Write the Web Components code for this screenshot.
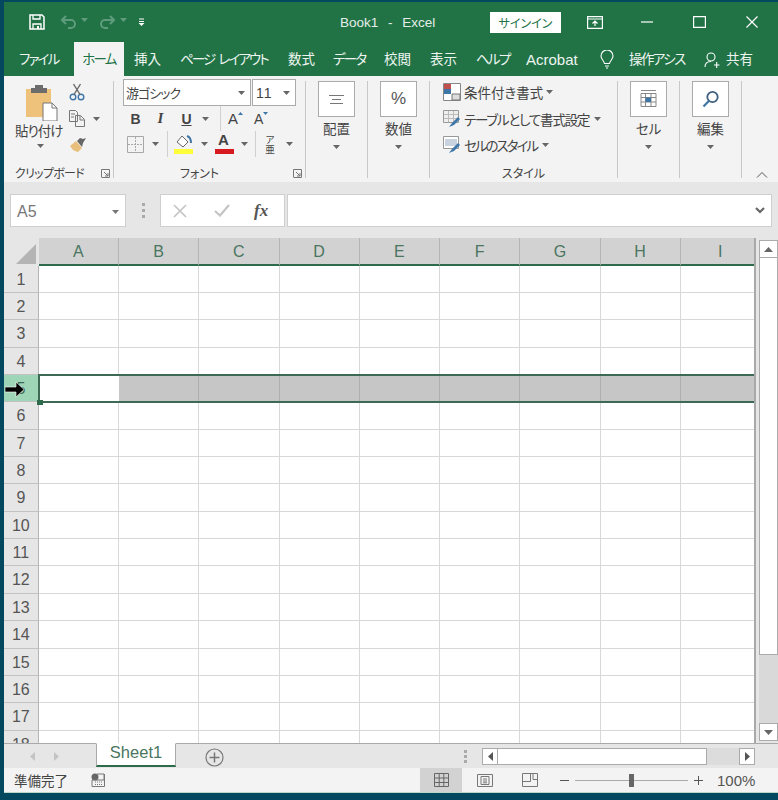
<!DOCTYPE html>
<html lang="ja">
<head>
<meta charset="utf-8">
<title>Book1 - Excel</title>
<style>
  html, body { margin: 0; height: 100%; background: #03485f; }
  body {
    font-family: "Noto Sans CJK JP", "Liberation Sans", sans-serif;
    font-feature-settings: "palt";
    color: #444;
    overflow: hidden;
  }
  #window { display: flex; flex-direction: column; width: 774px; height: 791px; margin: 2px 0 0 4px; background: #f3f3f3; }
</style>
</head>
<body>
<div id="window">
  <xl-titlebar></xl-titlebar>
  <xl-tabs></xl-tabs>
  <xl-ribbon></xl-ribbon>
  <xl-formula></xl-formula>
  <xl-sheet></xl-sheet>
  <xl-sheetbar></xl-sheetbar>
  <xl-status></xl-status>
</div>

<script>
class Shadowed extends HTMLElement {
  constructor() {
    super();
    this.attachShadow({ mode: "open" });
    this.shadowRoot.innerHTML = this.markup();
  }
}

const caret = (c = "#666") => `<svg width="7" height="4" viewBox="0 0 7 4"><path d="M0 0h7L3.500 4z" fill="${c}"/></svg>`;

class XlTitlebar extends Shadowed {
  markup() {
    return `
    <style>
      :host { display: flex; align-items: center; height: 40px; background: #217346; color: #fff; flex: none; position: relative; }
      .qat { display: flex; align-items: center; width: 336px; padding-left: 25px; box-sizing: border-box; gap: 0; }
      .title { font: 13.500px "Liberation Sans", sans-serif; width: 150px; color: #e4eee8; word-spacing: 6px; }
      .signin { width: 71px; height: 21px; background: #fff; color: #217346; font-size: 12px; display: flex; align-items: center; justify-content: center; }
      .ctl { display: flex; align-items: center; }
      svg { display: block; }
    </style>
    <div class="qat">
      <svg width="16" height="16" viewBox="0 0 16 16" fill="none" stroke="#fff" stroke-width="1.500"><path d="M1 1h12l2 2v12H1z"/><path d="M4 1v4h7V1M4 15v-5h8v5" stroke-width="1.300"/><path d="M8 12h2v3H8z" fill="#fff" stroke="none"/></svg>
      <svg style="margin-left:15px" width="17" height="14" viewBox="0 0 17 14" fill="none" stroke="#5f9c7c" stroke-width="2"><path d="M6 1L2 5l4 4M2 5h9a4 4 0 0 1 0 8H8"/></svg>
      <span style="margin:0 0 4px 4px">${caret("#5f9c7c")}</span>
      <svg style="margin-left:11px" width="17" height="14" viewBox="0 0 17 14" fill="none" stroke="#5f9c7c" stroke-width="2"><path d="M11 1l4 4-4 4M15 5H6a4 4 0 0 0 0 8h3"/></svg>
      <span style="margin:0 0 4px 4px">${caret("#5f9c7c")}</span>
      <svg style="margin-left:11px" width="7" height="8" viewBox="0 0 7 8"><path d="M1 1h5M1 3.500h5" stroke="#fff"/><path d="M.5 5h6L3.500 8z" fill="#fff"/></svg>
    </div>
    <div class="title">Book1 - Excel</div>
    <div class="signin">サインイン</div>
    <div class="ctl">
      <svg style="margin-left:26px" width="16" height="13" viewBox="0 0 16 13" fill="none" stroke="#fff" stroke-width="1.200"><path d="M.6.600h14.800v11.800H.6zM.6 3h14.800"/><path d="M8 10V5M5.500 7.500L8 5l2.500 2.500" /></svg>
      <svg style="margin-left:38px" width="12" height="2" viewBox="0 0 12 2"><path d="M0 1h12" stroke="#fff" stroke-width="1.200"/></svg>
      <svg style="margin-left:40px" width="13" height="12" viewBox="0 0 13 12" fill="none" stroke="#fff" stroke-width="1.200"><path d="M.6.600h11.800v10.800H.6z"/></svg>
      <svg style="margin-left:40px" width="12" height="12" viewBox="0 0 12 12" fill="none" stroke="#fff" stroke-width="1.200"><path d="M.5.500l11 11M11.500.5l-11 11"/></svg>
    </div>`;
  }
}

class XlTabs extends Shadowed {
  markup() {
    return `
    <style>
      :host { display: flex; align-items: stretch; height: 34px; background: #217346; color: #fff; font-size: 13.500px; flex: none; overflow: hidden; }
      .t { display: flex; align-items: center; white-space: pre; padding-bottom: 2px; box-sizing: border-box; color: #eef5f1; }
      .k { letter-spacing: -1.800px; }
      .on { background: #f3f3f3; color: #217346; justify-content: center; width: 50px; }
      .ac { font: 15px "Liberation Sans", sans-serif; padding-bottom: 0; }
    </style>
    <span class="t k" style="margin-left:15px;width:55px">ファイル</span>
    <span class="t k on">ホーム</span>
    <span class="t" style="margin-left:10px;width:46px">挿入</span>
    <span class="t k" style="width:108px;letter-spacing:-1.900px;word-spacing:3px">ページ レイアウト</span>
    <span class="t" style="width:45px">数式</span>
    <span class="t k" style="width:51px">データ</span>
    <span class="t" style="width:46px">校閲</span>
    <span class="t" style="width:46px">表示</span>
    <span class="t k" style="width:50px">ヘルプ</span>
    <span class="t ac" style="width:74px">Acrobat</span>
    <svg style="align-self:center;margin-top:0" width="14" height="19" viewBox="0 0 14 19" fill="none" stroke="#fff" stroke-width="1.100"><path d="M4.500 13.500C4 10.500 1 9.500 1 6a6 6 0 0 1 12 0c0 3.500-3 4.500-3.500 7.500zM5 16h4M6 18h2"/></svg>
    <span class="t" style="margin-left:15px;width:57px;letter-spacing:-1.600px">操作アシス</span>
    <svg style="align-self:center;margin:1px 0 0 18px" width="16" height="16" viewBox="0 0 16 16" fill="none" stroke="#fff" stroke-width="1.100"><circle cx="7" cy="5" r="4"/><path d="M1 15c0-3 2-5.500 6-5.500M10 13h5.500M12.700 10v6"/></svg>
    <span class="t" style="margin-left:6px;width:30px">共有</span>`;
  }
}

// one ribbon group: slot for content, label along the bottom
class XlGroup extends Shadowed {
  static get observedAttributes() { return ["label", "launcher"]; }
  attributeChangedCallback(name, _, value) {
    if (name === "label") this.shadowRoot.querySelector(".label").textContent = value;
    if (name === "launcher") this.shadowRoot.querySelector(".launch").style.display = "block";
  }
  markup() {
    return `
    <style>
      :host { display: block; position: relative; box-sizing: border-box; height: 97px; margin-top: 5px; border-right: 1px solid #c8c8c8; flex: none; }
      .label { position: absolute; left: 0; right: var(--label-right, 0); top: 84px; text-align: center; font-size: 12px; line-height: 16px; color: #444; letter-spacing: var(--label-ls, 0); white-space: nowrap; }
      .launch { display: none; position: absolute; right: 3px; top: 88px; }
    </style>
    <slot></slot>
    <div class="label"></div>
    <svg class="launch" width="9" height="9" viewBox="0 0 9 9" fill="none" stroke="#777"><path d="M.5 8V.5H8.500V8.500H.5M3 3l4 4M7 4v3H4"/></svg>`;
  }
}

// big square button: icon box, label, caret
class XlBigButton extends Shadowed {
  static get observedAttributes() { return ["label"]; }
  attributeChangedCallback(name, _, value) {
    this.shadowRoot.querySelector(".txt").textContent = value;
  }
  markup() {
    return `
    <style>
      :host { display: flex; flex-direction: column; align-items: center; width: 37px; margin-left: 12px; }
      .box { width: 35px; height: 34px; border: 1px solid #ababab; background: #fff; display: flex; align-items: center; justify-content: center; flex: none; }
      .txt { font-size: 13.500px; line-height: 20px; margin-top: 1px; color: #444; white-space: nowrap; }
      .car { line-height: 0; margin-top: 4px; }
    </style>
    <div class="box"><slot></slot></div>
    <div class="txt"></div>
    <div class="car">${caret()}</div>`;
  }
}

class XlRibbon extends Shadowed {
  markup() {
    return `
    <style>
      :host { display: flex; height: 106px; background: #f3f3f3; flex: none; position: relative; color: #444; }
      svg { display: block; }
      .row { display: flex; align-items: center; }
      .combo { height: 25px; border: 1px solid #ababab; background: #fff; display: flex; align-items: center; justify-content: space-between; padding: 0 5px 0 2px; font-size: 13px; letter-spacing: -1px; }
      .b { font: bold 14px "Liberation Sans", sans-serif; color: #444; width: 25px; text-align: center; }
      .sep { width: 1px; background: #d0d0d0; align-self: stretch; }
      .st { display: flex; align-items: center; height: 26.500px; font-size: 13.500px; gap: 3px; white-space: nowrap; }
      .collapse { position: absolute; left: 752px; top: 95px; }
    </style>
    <xl-group label="クリップボード" launcher style="width:110px;--label-right:18px;--label-ls:-.7px">
      <svg style="position:absolute;left:22px;top:3px" width="33" height="37" viewBox="0 0 33 37">
        <rect x="0" y="5" width="25" height="28" fill="#eec27a"/>
        <rect x="9" y="1" width="8" height="7" fill="#6c6c6c"/><rect x="5" y="4" width="16" height="5" fill="#6c6c6c"/>
        <path d="M17 19h9l5 5v13H17z" fill="#fff" stroke="#777"/><path d="M26 19v5h5" fill="none" stroke="#777"/>
      </svg>
      <div style="position:absolute;left:11px;top:39px;font-size:13.500px;line-height:20px;letter-spacing:-1px;white-space:nowrap">貼り付け</div>
      <div style="position:absolute;left:33px;top:63px;line-height:0">${caret()}</div>
      <svg style="position:absolute;left:65px;top:2px" width="16" height="18" viewBox="0 0 16 18" fill="none" stroke="#3f76a8" stroke-width="1.400"><circle cx="4" cy="14" r="2.800"/><circle cx="12" cy="14" r="2.800"/><path d="M5 11.500L11.500 1M11 11.500L4.500 1" stroke="#666"/></svg>
      <svg style="position:absolute;left:65px;top:29px" width="16" height="17" viewBox="0 0 16 17" fill="none" stroke="#777"><path d="M.5.500h6l2 2v9h-8zM6.500 5.500h5l4 4v7h-9zM11 6v4h4M2 4h4M2 7h3"/></svg>
      <div style="position:absolute;left:89px;top:36px;line-height:0">${caret()}</div>
      <svg style="position:absolute;left:66px;top:57px" width="17" height="15" viewBox="0 0 17 15"><path d="M0 8l6-5 6 7-4 4-3-1-2-1z" fill="#e8bf7d"/><path d="M7 3l3-3 3 1 3-1-3 5-1 4z" fill="#666"/></svg>
    </xl-group>

    <xl-group label="フォント" launcher style="width:192px;--label-right:20px">
      <div class="row" style="position:absolute;left:9px;top:-2px">
        <div class="combo" style="width:119px">游ゴシック<span style="line-height:0">${caret()}</span></div>
        <div class="combo" style="width:34px;margin-left:1px;font:14px 'Liberation Sans',sans-serif;letter-spacing:1px;padding-left:3px">11<span style="line-height:0">${caret()}</span></div>
      </div>
      <div class="row" style="position:absolute;left:9px;top:25px;height:25px">
        <span class="b">B</span>
        <span class="b" style="font-family:'Liberation Serif',serif;font-style:italic;font-size:15px">I</span>
        <span class="b" style="text-decoration:underline;margin-left:1px">U</span>
        <span style="line-height:0;margin:0 11px 0 3px">${caret()}</span>
        <span class="sep"></span>
        <span style="font:15px 'Liberation Sans',sans-serif;margin-left:7px">A</span><svg style="margin:-10px 0 0 0" width="5" height="4"><path d="M0 3l2.500-3L5 3z" fill="#3f76a8"/></svg>
        <span style="font:14px 'Liberation Sans',sans-serif;margin-left:11px">A</span><svg style="margin:-10px 0 0 0" width="5" height="4"><path d="M0 0l2.500 3L5 0z" fill="#3f76a8"/></svg>
      </div>
      <div class="row" style="position:absolute;left:13px;top:50px;height:26px">
        <svg width="17" height="17" viewBox="0 0 17 17" fill="none" stroke="#a8a8a8"><path d="M.5.500h16v16H.5z"/><path d="M8.500 1v15M1 8.500h15" stroke-dasharray="2 1"/></svg>
        <span style="line-height:0;margin:0 8px 0 8px">${caret()}</span>
        <span class="sep"></span>
        <svg style="margin-left:6px" width="19" height="20" viewBox="0 0 19 20"><path d="M3 8l5-6 6 6-5 5z" fill="#fff" stroke="#666"/><path d="M13 2c3 1 4 3 4 7" fill="none" stroke="#3f76a8" stroke-width="2"/><rect y="15" width="19" height="5" fill="#ffff3b"/></svg>
        <span style="line-height:0;margin:0 7px 0 8px">${caret()}</span>
        <span style="position:relative;width:19px;height:20px;flex:none">
          <span style="position:absolute;left:3px;top:-3px;font:bold 15px 'Liberation Sans',sans-serif;color:#444">A</span>
          <svg style="position:absolute;left:0;top:15px" width="19" height="5"><rect width="19" height="5" fill="#d71920"/></svg>
        </span>
        <span style="line-height:0;margin:0 7px 0 7px">${caret()}</span>
        <span class="sep"></span>
        <span style="font-size:9.500px;line-height:10.500px;width:12px;margin-left:8px;text-align:center">ア<br>亜</span>
        <span style="line-height:0;margin-left:10px">${caret()}</span>
      </div>
    </xl-group>

    <xl-group style="width:62px" label="">
      <xl-big-button label="配置">
        <svg width="15" height="9" viewBox="0 0 15 9" fill="none" stroke="#777"><path d="M0 .5h15M3 4.500h9M1 8.500h13"/></svg>
      </xl-big-button>
    </xl-group>
    <xl-group style="width:62px" label="">
      <xl-big-button label="数値">
        <span style="font:17px 'Liberation Sans',sans-serif;color:#555">%</span>
      </xl-big-button>
    </xl-group>

    <xl-group label="スタイル" style="width:188px">
      <div style="position:absolute;left:13px;top:-2px">
        <div class="st"><svg width="18" height="18" viewBox="0 0 18 18"><path d="M.5.500h17v17H.5z" fill="#fff" stroke="#888"/><path d="M1 1h7v5H1z" fill="#c0504d"/><path d="M1 6h7v5H1z" fill="#3f76a8"/><path d="M9 11h8v6H9z" fill="#ddd" stroke="#777"/></svg><span>条件付き書式</span> ${caret()}</div>
        <div class="st" style="gap:2px"><svg width="19" height="18" viewBox="0 0 19 18"><path d="M.5.500h15v12H.5z" fill="#eee" stroke="#999"/><path d="M1 4.500h14M1 8.500h14M5.500 1v11M10.500 1v11" stroke="#bbb"/><path d="M6 17l3-4 6-6 2 2-6 6z" fill="#3f76a8"/></svg><span style="letter-spacing:-1.200px;margin-right:3px">テーブルとして書式設定</span> ${caret()}</div>
        <div class="st" style="gap:2px"><svg width="19" height="18" viewBox="0 0 19 18"><path d="M.5.500h15v12H.5z" fill="#fff" stroke="#999"/><path d="M2 3h12v7H2z" fill="#c9d3e0"/><path d="M6 17l3-4 6-6 2 2-6 6z" fill="#3f76a8"/></svg><span style="letter-spacing:-2px;margin-right:3px">セルのスタイル</span> ${caret()}</div>
      </div>
    </xl-group>
    <xl-group style="width:62px" label="">
      <xl-big-button label="セル">
        <svg width="17" height="19" viewBox="0 0 17 19" fill="none" stroke="#888"><path d="M1 3.500h15v13H1zM1 7.500h15M1 12h15M5.500 3.500v13M11 3.500v13M1 .5h15"/><rect x="5.500" y="7.500" width="5.500" height="4.500" fill="#3f76a8" stroke="none"/></svg>
      </xl-big-button>
    </xl-group>
    <xl-group style="width:62px" label="">
      <xl-big-button label="編集">
        <svg width="18" height="18" viewBox="0 0 18 18" fill="none" stroke-width="1.800"><circle cx="10.500" cy="7" r="5.200" stroke="#3f5f7f"/><path d="M6.800 11L1.500 16.500" stroke="#3f76a8" stroke-width="2.200"/></svg>
      </xl-big-button>
    </xl-group>
    <svg class="collapse" width="12" height="7" viewBox="0 0 12 7" fill="none" stroke="#555"><path d="M1 6.500l5-5 5 5"/></svg>`;
  }
}

class XlFormula extends Shadowed {
  markup() {
    return `
    <style>
      :host { display: flex; height: 56px; background: #e6e6e6; padding: 12px 6px 11px 6px; box-sizing: border-box; align-items: stretch; flex: none; }
      .box { background: #fff; border: 1px solid #cfcfcf; box-sizing: border-box; display: flex; align-items: center; }
      .name { width: 116px; justify-content: space-between; padding: 2px 6px 0 6px; font: 16px "Liberation Sans", sans-serif; color: #777; }
      .dots { width: 34px; display: flex; flex-direction: column; align-items: center; justify-content: center; gap: 3px; }
      .dots i { width: 3px; height: 3px; background: #aaa; }
      .fn { width: 125px; padding-left: 12px; gap: 0; }
      .fx { font: italic bold 17px "Liberation Serif", serif; color: #555; margin-left: 24px; }
      .input { flex: 1; margin-left: 2px; justify-content: flex-end; padding-right: 6px; }
      svg { display: block; }
    </style>
    <div class="box name">A5${caret("#777")}</div>
    <div class="dots"><i></i><i></i><i></i></div>
    <div class="box fn">
      <svg width="14" height="14" viewBox="0 0 14 14" stroke="#c4c4c4" stroke-width="1.700"><path d="M1 1l12 12M13 1L1 13"/></svg>
      <svg style="margin-left:27px" width="16" height="13" viewBox="0 0 16 13" fill="none" stroke="#c4c4c4" stroke-width="2.200"><path d="M1 7l5 4.500L15 1"/></svg>
      <span class="fx">fx</span>
    </div>
    <div class="box input"><svg width="10" height="7" viewBox="0 0 10 7" fill="none" stroke="#666" stroke-width="2.200"><path d="M1 1l4 4 4-4"/></svg></div>`;
  }
}

class XlSheet extends Shadowed {
  markup() {
    const cols = "ABCDEFGHI".split("");
    const head = cols.map(c => `<div class="ch">${c}</div>`).join("");
    let rows = "";
    for (let r = 1; r <= 18; r++) {
      const sel = r === 5 ? " sel" : "";
      rows += `<div class="rh${sel}">${r}</div>` + cols.map(c => `<div class="c${sel}"></div>`).join("");
    }
    return `
    <style>
      :host { display: flex; height: 505px; background: #fff; flex: none; overflow: hidden; }
      .pane { flex: 1; position: relative; overflow: hidden; border-right: 2px solid #a9a9a9; box-sizing: border-box; }
      .grid { display: grid; grid-template-columns: 34.750px repeat(8, 80.250px) 80px; grid-template-rows: 27.700px repeat(18, 27.350px); }
      .corner { background: #e6e6e6; display: flex; align-items: flex-end; justify-content: flex-end; padding: 0 3px 2px 0; }
      .ch { background: #d2d2d2; border-right: 1px solid #b4b4b4; border-bottom: 2px solid #2e6b4c; box-sizing: border-box; text-align: center; font: 16px/27px "Liberation Sans", sans-serif; color: #4a7560; }
      .rh { background: #e6e6e6; border-bottom: 1px solid #c2c2c2; border-right: 1px solid #b4b4b4; box-sizing: border-box; text-align: center; font: 16px/28.500px "Liberation Sans", sans-serif; color: #555; }
      .rh.sel { background: #9fd5b7; color: #3d6a54; }
      .c { border-right: 1px solid #d8d8d8; border-bottom: 1px solid #d8d8d8; box-sizing: border-box; }
      .c.sel { background: #c6c6c6; border-right-color: #aeaeae; border-bottom: 0; }
      .select { position: absolute; left: 33.500px; top: 136px; right: -2px; height: 29px; border: 2px solid #3d6a54; border-right: 0; box-sizing: border-box; }
      .active { position: absolute; left: 35.500px; top: 138px; width: 79px; height: 25px; background: #fff; }
      .handle { position: absolute; left: 33px; top: 162px; width: 6px; height: 5px; background: #2e6b4c; }
      .arrow { position: absolute; left: 1px; top: 144px; }
      .bar { width: 22px; flex: none; background: #e6e6e6; padding: 2px 0 2px 3px; box-sizing: border-box; display: flex; flex-direction: column; }
      .btn { width: 17px; height: 16px; background: #fff; border: 1px solid #ababab; display: flex; align-items: center; justify-content: center; flex: none; }
      .thumb { width: 17px; flex: none; height: 396px; background: #fff; border: 1px solid #ababab; border-top: 0; }
      .track { flex: 1; width: 19px; background: #d9d9d9; }
    </style>
    <div class="pane">
      <div class="grid">
        <div class="corner"><svg width="20" height="20" viewBox="0 0 20 20"><path d="M20 0v20H0z" fill="#b4b4b4"/></svg></div>
        ${head}
        ${rows}
      </div>
      <div class="select"></div>
      <div class="active"></div>
      <div class="handle"></div>
      <svg class="arrow" width="20" height="15" viewBox="0 0 20 15"><path d="M0 5h11V0l8 7.500-8 7.500V10H0z" fill="#000" stroke="#fff" stroke-width=".6"/></svg>
    </div>
    <div class="bar">
      <div class="btn"><svg width="9" height="5" viewBox="0 0 9 5"><path d="M0 5h9L4.500 0z" fill="#666"/></svg></div>
      <div class="thumb"></div>
      <div class="track"></div>
      <div class="btn"><svg width="9" height="5" viewBox="0 0 9 5"><path d="M0 0h9L4.500 5z" fill="#666"/></svg></div>
    </div>`;
  }
}

class XlSheetbar extends Shadowed {
  markup() {
    return `
    <style>
      :host { display: flex; height: 25px; background: #e6e6e6; align-items: flex-start; flex: none; position: relative; border-top: 1px solid #a9a9a9; box-sizing: border-box; }
      svg { display: block; }
      .nav { width: 92px; display: flex; align-items: center; height: 24px; padding-left: 26px; box-sizing: border-box; gap: 19px; }
      .tab { width: 80px; height: 24px; margin-top: -1px; background: #fff; border: 1px solid #a9a9a9; border-bottom: 2px solid #2e6b4c; border-top: 1px solid #fff; box-sizing: border-box; color: #4a7560; font: 16.500px/17px "Liberation Sans", sans-serif; text-align: center; }
      .add { margin: 4px 0 0 29px; }
      .dots { position: absolute; left: 460px; top: 6px; display: flex; flex-direction: column; gap: 2px; }
      .dots i { width: 3px; height: 3px; background: #aaa; }
      .scroll { position: absolute; left: 478px; top: 4px; width: 273px; height: 17px; display: flex; }
      .arr { width: 16px; background: #fff; border: 1px solid #ababab; display: flex; align-items: center; justify-content: center; box-sizing: border-box; flex: none; }
      .thumb { width: 209px; background: #fff; border: 1px solid #ababab; border-left: 0; box-sizing: border-box; flex: none; }
      .gap { flex: 1; background: #dcdcdc; }
    </style>
    <div class="nav">
      <svg width="5" height="9" viewBox="0 0 5 9"><path d="M5 0v9L0 4.500z" fill="#c4c4c4"/></svg>
      <svg width="5" height="9" viewBox="0 0 5 9"><path d="M0 0v9l5-4.500z" fill="#c4c4c4"/></svg>
    </div>
    <div class="tab">Sheet1</div>
    <svg class="add" width="19" height="19" viewBox="0 0 19 19" fill="none" stroke="#777" stroke-width="1.200"><circle cx="9.500" cy="9.500" r="8.500"/><path d="M9.500 4.500v10M4.500 9.500h10" stroke-width="1.500"/></svg>
    <div class="dots"><i></i><i></i><i></i></div>
    <div class="scroll">
      <div class="arr"><svg width="5" height="9" viewBox="0 0 5 9"><path d="M5 0v9L0 4.500z" fill="#555"/></svg></div>
      <div class="thumb"></div>
      <div class="gap"></div>
      <div class="arr"><svg width="5" height="9" viewBox="0 0 5 9"><path d="M0 0v9l5-4.500z" fill="#555"/></svg></div>
    </div>`;
  }
}

class XlStatus extends Shadowed {
  markup() {
    return `
    <style>
      :host { display: flex; height: 25px; background: #f3f3f3; align-items: center; flex: none; border-bottom: 1px solid #b9d8c8; box-sizing: border-box; font-size: 13.500px; color: #444; }
      svg { display: block; }
      .ready { margin-left: 10px; width: 77px; }
      .view { width: 45px; height: 24px; display: flex; align-items: center; justify-content: center; flex: none; }
      .normal { background: #d2d2d2; width: 42px; }
      .slider { position: relative; width: 113px; height: 1px; background: #aaa; margin: 0 6px; }
      .knob { position: absolute; left: 54px; top: -6px; width: 5px; height: 13px; background: #666; }
      .zoom { font: 15px "Liberation Sans", sans-serif; margin-left: 14px; color: #555; }
    </style>
    <span class="ready">準備完了</span>
    <svg width="14" height="14" viewBox="0 0 14 14"><circle cx="4" cy="4" r="3.500" fill="#666"/><path d="M1 7h12V1H6M1 7v6.500h12.500V1" fill="none" stroke="#777"/><path d="M4 9h8M4 11.500h8" stroke="#777" stroke-dasharray="1 1"/></svg>
    <span style="flex:none;width:315px"></span>
    <div class="view normal"><svg width="15" height="14" viewBox="0 0 15 14" fill="none" stroke="#666"><path d="M.5.500h14v13H.5zM.5 5h14M.5 9.500h14M5.200.5v13M9.800.5v13"/></svg></div>
    <div class="view"><svg width="16" height="13" viewBox="0 0 16 13" fill="none" stroke="#777"><path d="M.5.500h15v12H.5zM4 2.500h8v8H4zM6 5h4M6 7h4M6 8.800h4"/></svg></div>
    <div class="view"><svg width="16" height="14" viewBox="0 0 16 14" fill="none" stroke="#777"><path d="M.5.500h15v13H.5zM.5 8.500h8v-8M11 .5v6h4.500"/></svg></div>
    <svg style="margin-left:8px" width="9" height="1"><rect width="9" height="1" fill="#555"/></svg>
    <div class="slider"><div class="knob"></div></div>
    <svg width="9" height="9"><path d="M0 4.500h9M4.500 0v9" stroke="#555"/></svg>
    <span class="zoom">100%</span>`;
  }
}

customElements.define("xl-titlebar", XlTitlebar);
customElements.define("xl-tabs", XlTabs);
customElements.define("xl-group", XlGroup);
customElements.define("xl-big-button", XlBigButton);
customElements.define("xl-ribbon", XlRibbon);
customElements.define("xl-formula", XlFormula);
customElements.define("xl-sheet", XlSheet);
customElements.define("xl-sheetbar", XlSheetbar);
customElements.define("xl-status", XlStatus);
</script>
</body>
</html>
